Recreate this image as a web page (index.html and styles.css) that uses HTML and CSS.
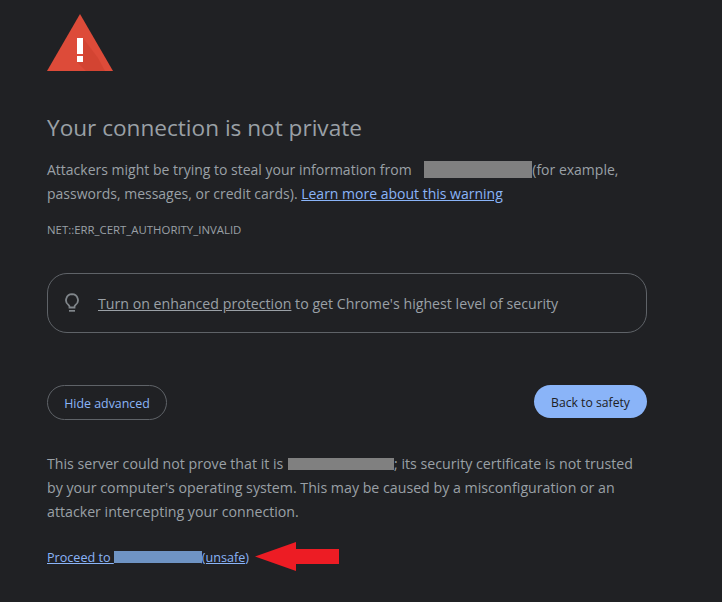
FILE: index.html
```html
<!DOCTYPE html>
<html lang="en">
<head>
<meta charset="utf-8">
<title>Privacy error</title>
<link rel="stylesheet" href="styles.css">
</head>
<body>
<main class="page">
  <svg class="warn" viewBox="0 0 66 57" width="66" height="57" aria-hidden="true">
    <polygon points="33,0 66,57 0,57" fill="#dd4b39"/>
    <polygon points="36,24 36,48 30,48 39,57 58,57 51,44" fill="#c53929" opacity=".4"/>
    <rect x="30" y="24" width="6" height="16" fill="#fff"/>
    <rect x="30" y="42" width="6" height="6" fill="#fff"/>
  </svg>
  <h1 class="title">Your connection is not private</h1>
  <p class="para">Attackers might be trying to steal your information from <span class="redact redact-host"></span>(for example, passwords, messages, or credit cards). <a class="link" href="#">Learn more about this warning</a></p>
  <p class="code">NET::ERR_CERT_AUTHORITY_INVALID</p>
  <div class="promo">
    <svg class="bulb" viewBox="0 0 16 20" width="16" height="20" aria-hidden="true">
      <path d="M8 1.200a6 6 0 0 0-3.400 10.900c.6.500.9 1 .9 1.700v.7h5v-.7c0-.7.300-1.200.9-1.700A6 6 0 0 0 8 1.200z" fill="none" stroke="#80868b" stroke-width="1.800"/>
      <rect x="5" y="17" width="6" height="1.700" fill="#80868b"/>
    </svg>
    <span class="promo-text"><a class="promo-link" href="#">Turn on enhanced protection</a> to get Chrome's highest level of security</span>
  </div>
  <div class="actions">
    <button class="btn btn-ghost" type="button">Hide advanced</button>
    <button class="btn btn-primary" type="button">Back to safety</button>
  </div>
  <p class="para para-detail">This server could not prove that it is <span class="redact redact-server"></span>; its security certificate is not trusted by your computer's operating system. This may be caused by a misconfiguration or an attacker intercepting your connection.</p>
  <div class="proceed">
    <a class="link link-small" href="#">Proceed to <span class="redact-link"></span>(unsafe)</a>
    <svg class="arrow" viewBox="0 0 84 30" width="84" height="30" aria-hidden="true">
      <polygon points="0,14.500 41,0 41,7 84,7 84,22 41,22 41,29" fill="#ed1c24"/>
    </svg>
  </div>
</main>
</body>
</html>
```

FILE: styles.css
```css
* { box-sizing: border-box; }
html, body { margin: 0; height: 100%; }
body {
  background: #202124;
  color: #9aa0a6;
  font-family: "Open Sans", "Noto Sans", sans-serif;
  font-size: 14px;
  overflow: hidden;
}
.page { width: 600px; margin-left: 47px; padding-top: 14px; }
.warn { display: block; }
.title {
  margin: 42px 0 0;
  font-size: 22.600px;
  font-weight: 400;
  line-height: 30px;
  color: #9aa0a6;
}
.para { margin: 15px 0 0; line-height: 24px; }
.redact {
  display: inline-block;
  height: 17px;
  background: #808080;
  vertical-align: -3px;
}
.redact-host { width: 108px; margin-left: 9px; }
.redact-server { width: 106px; height: 12px; vertical-align: -1px; margin-left: 1px; }
.link { color: #8ab4f8; text-decoration: underline; }
.code { margin: 16px 0 0; font-size: 11.400px; line-height: 16px; }
.promo {
  display: flex;
  align-items: center;
  gap: 18px;
  height: 60px;
  margin-top: 35px;
  padding-left: 16px;
  border: 1px solid #5f6368;
  border-radius: 20px;
  font-size: 14.200px;
}
.promo-link { color: inherit; text-decoration: underline; }
.actions { display: flex; justify-content: space-between; align-items: flex-start; margin-top: 52px; }
.btn { font: inherit; font-size: 12.400px; border-radius: 18px; cursor: pointer; padding: 1px 0 0; }
.btn-ghost {
  width: 120px;
  height: 35px;
  background: transparent;
  border: 1px solid #5f6368;
  color: #8ab4f8;
}
.btn-primary {
  width: 113px;
  height: 33px;
  border: 0;
  background: #8ab4f8;
  color: #202124;
  font-size: 12.200px;
}
.para-detail { margin-top: 32px; font-size: 14.200px; }
.proceed { display: flex; align-items: center; gap: 6px; margin-top: 18px; }
.link-small { font-size: 12.600px; line-height: 17px; }
.redact-link {
  display: inline-block;
  width: 88px;
  height: 12px;
  background: #6f94c4;
  vertical-align: -1px;
}
.arrow { display: block; }
```
